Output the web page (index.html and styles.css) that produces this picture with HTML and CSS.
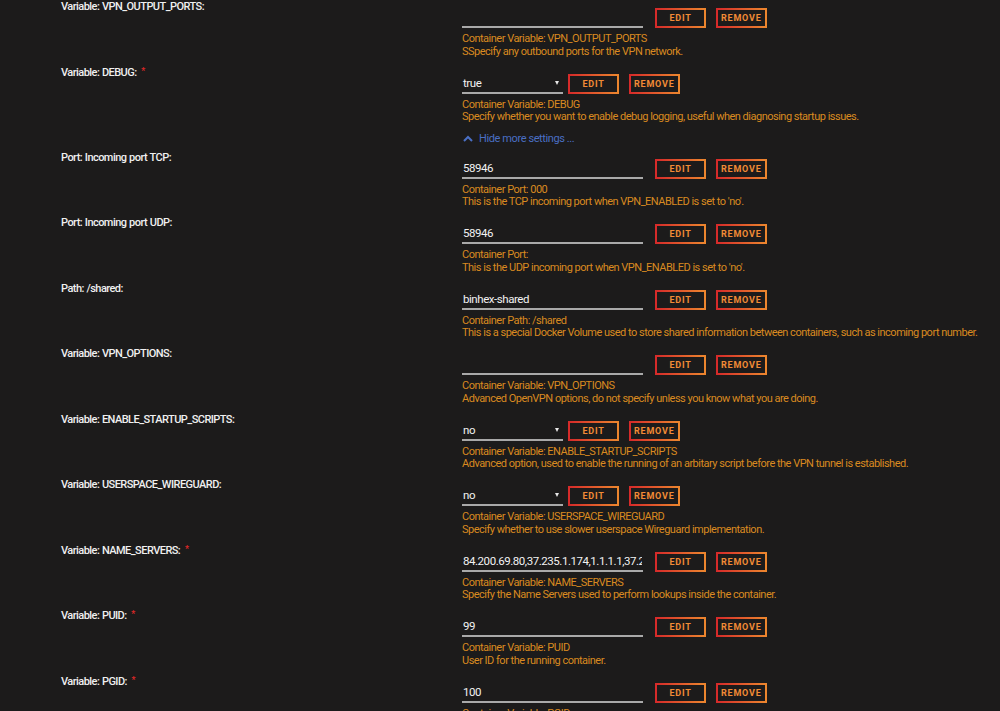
FILE: index.html
```html
<!DOCTYPE html>
<html lang="en">
<head>
    <meta charset="UTF-8">
    <meta name="viewport" content="width=device-width, initial-scale=1.0">
    <title>Docker Container Settings</title>
    <link rel="stylesheet" href="styles.css">
</head>
<body>
    <div class="settings">
        <div class="row">
            <div class="label">Variable: VPN_OUTPUT_PORTS:</div>
            <div class="field">
                <div class="controls">
                    <input class="text-input" type="text" value="">
                    <button class="btn">Edit</button>
                    <button class="btn btn-remove">Remove</button>
                </div>
                <div class="desc">Container Variable: VPN_OUTPUT_PORTS<br>SSpecify any outbound ports for the VPN network.</div>
            </div>
        </div>

        <div class="row">
            <div class="label">Variable: DEBUG: <span class="required">*</span></div>
            <div class="field">
                <div class="controls">
                    <div class="select"><span>true</span><span class="arrow"></span></div>
                    <button class="btn">Edit</button>
                    <button class="btn btn-remove">Remove</button>
                </div>
                <div class="desc">Container Variable: DEBUG<br>Specify whether you want to enable debug logging, useful when diagnosing startup issues.</div>
            </div>
        </div>

        <!-- advanced toggle -->
        <div class="row row-toggle">
            <div class="label"></div>
            <div class="toggle">
                <svg width="10" height="7" viewBox="0 0 10 7"><polyline points="1,6 5,2 9,6" fill="none" stroke="#4a6fc4" stroke-width="2"/></svg>
                <span>Hide more settings ...</span>
            </div>
        </div>

        <div class="row">
            <div class="label">Port: Incoming port TCP:</div>
            <div class="field">
                <div class="controls">
                    <input class="text-input" type="text" value="58946">
                    <button class="btn">Edit</button>
                    <button class="btn btn-remove">Remove</button>
                </div>
                <div class="desc">Container Port: 000<br>This is the TCP incoming port when VPN_ENABLED is set to 'no'.</div>
            </div>
        </div>

        <div class="row">
            <div class="label">Port: Incoming port UDP:</div>
            <div class="field">
                <div class="controls">
                    <input class="text-input" type="text" value="58946">
                    <button class="btn">Edit</button>
                    <button class="btn btn-remove">Remove</button>
                </div>
                <div class="desc">Container Port:<br>This is the UDP incoming port when VPN_ENABLED is set to 'no'.</div>
            </div>
        </div>

        <div class="row">
            <div class="label">Path: /shared:</div>
            <div class="field">
                <div class="controls">
                    <input class="text-input" type="text" value="binhex-shared">
                    <button class="btn">Edit</button>
                    <button class="btn btn-remove">Remove</button>
                </div>
                <div class="desc">Container Path: /shared<br>This is a special Docker Volume used to store shared information between containers, such as incoming port number.</div>
            </div>
        </div>

        <div class="row">
            <div class="label">Variable: VPN_OPTIONS:</div>
            <div class="field">
                <div class="controls">
                    <input class="text-input" type="text" value="">
                    <button class="btn">Edit</button>
                    <button class="btn btn-remove">Remove</button>
                </div>
                <div class="desc">Container Variable: VPN_OPTIONS<br>Advanced OpenVPN options, do not specify unless you know what you are doing.</div>
            </div>
        </div>

        <div class="row">
            <div class="label">Variable: ENABLE_STARTUP_SCRIPTS:</div>
            <div class="field">
                <div class="controls">
                    <div class="select"><span>no</span><span class="arrow"></span></div>
                    <button class="btn">Edit</button>
                    <button class="btn btn-remove">Remove</button>
                </div>
                <div class="desc">Container Variable: ENABLE_STARTUP_SCRIPTS<br>Advanced option, used to enable the running of an arbitary script before the VPN tunnel is established.</div>
            </div>
        </div>

        <div class="row">
            <div class="label">Variable: USERSPACE_WIREGUARD:</div>
            <div class="field">
                <div class="controls">
                    <div class="select"><span>no</span><span class="arrow"></span></div>
                    <button class="btn">Edit</button>
                    <button class="btn btn-remove">Remove</button>
                </div>
                <div class="desc">Container Variable: USERSPACE_WIREGUARD<br>Specify whether to use slower userspace Wireguard implementation.</div>
            </div>
        </div>

        <div class="row">
            <div class="label">Variable: NAME_SERVERS: <span class="required">*</span></div>
            <div class="field">
                <div class="controls">
                    <input class="text-input" type="text" value="84.200.69.80,37.235.1.174,1.1.1.1,37.235.1.177,1.0.0.1">
                    <button class="btn">Edit</button>
                    <button class="btn btn-remove">Remove</button>
                </div>
                <div class="desc">Container Variable: NAME_SERVERS<br>Specify the Name Servers used to perform lookups inside the container.</div>
            </div>
        </div>

        <div class="row">
            <div class="label">Variable: PUID: <span class="required">*</span></div>
            <div class="field">
                <div class="controls">
                    <input class="text-input" type="text" value="99">
                    <button class="btn">Edit</button>
                    <button class="btn btn-remove">Remove</button>
                </div>
                <div class="desc">Container Variable: PUID<br>User ID for the running container.</div>
            </div>
        </div>

        <div class="row">
            <div class="label">Variable: PGID: <span class="required">*</span></div>
            <div class="field">
                <div class="controls">
                    <input class="text-input" type="text" value="100">
                    <button class="btn">Edit</button>
                    <button class="btn btn-remove">Remove</button>
                </div>
                <div class="desc">Container Variable: PGID<br>Group ID for the running container.</div>
            </div>
        </div>
    </div>
</body>
</html>
```

FILE: styles.css
```css
html, body {
    margin: 0;
    height: 100%;
    overflow: hidden;
}
body {
    background-color: #1c1b1b;
    font-family: Roboto, "Liberation Sans", Arial, sans-serif;
    color: #f2f2f2;
}
.settings {
    padding-left: 61px;
}
.row {
    display: grid;
    grid-template-columns: 401px 1fr;
}
.label {
    font-size: 11px;
    font-weight: 500;
    line-height: 14px;
    letter-spacing: -0.55px;
    word-spacing: 0.5px;
    color: #f0f0f0;
}
.required {
    color: #e22828;
    font-size: 9px;
    vertical-align: top;
    line-height: 10px;
    margin-left: 2px;
}
.field {
    padding-top: 8px;
    padding-bottom: 7.5px;
}
.controls {
    display: flex;
    align-items: center;
    height: 20px;
}
.text-input {
    width: 181px;
    height: 20px;
    box-sizing: border-box;
    margin: 0 12px 0 0;
    padding: 0 1px;
    border: none;
    border-bottom: 2px solid #a9a9a9;
    background: transparent;
    color: #f2f2f2;
    font-family: inherit;
    font-size: 11.5px;
    letter-spacing: -0.45px;
    outline: none;
}
.select {
    width: 101px;
    height: 20px;
    box-sizing: border-box;
    margin-right: 5px;
    padding: 0 4px 0 1px;
    border-bottom: 2px solid #a9a9a9;
    display: flex;
    align-items: center;
    justify-content: space-between;
    font-size: 11.5px;
    letter-spacing: -0.45px;
    color: #f2f2f2;
}
.arrow {
    width: 0;
    height: 0;
    border-left: 2.5px solid transparent;
    border-right: 2.5px solid transparent;
    border-top: 4px solid #e8e8e8;
}
.btn {
    min-width: 51px;
    height: 20px;
    box-sizing: border-box;
    margin-right: 10px;
    padding: 0 3px;
    border: 2px solid #d62a2a;
    border-image: linear-gradient(90deg, #d62a2a 0, #ec862e) 1;
    background: #1c1b1b;
    color: #f28b36;
    font-family: inherit;
    font-size: 9px;
    font-weight: bold;
    letter-spacing: 0.8px;
    text-transform: uppercase;
    cursor: pointer;
}
.btn-remove {
    min-width: 50px;
}
.desc {
    margin-top: 5px;
    font-size: 11px;
    line-height: 12.5px;
    letter-spacing: -0.5px;
    color: #d98a20;
    white-space: nowrap;
}
.row-toggle {
    height: 19.5px;
}
.toggle {
    display: flex;
    align-items: center;
    gap: 6px;
    height: 14px;
    padding-left: 1px;
    font-size: 11px;
    letter-spacing: -0.4px;
    color: #4a6fc4;
}
```
